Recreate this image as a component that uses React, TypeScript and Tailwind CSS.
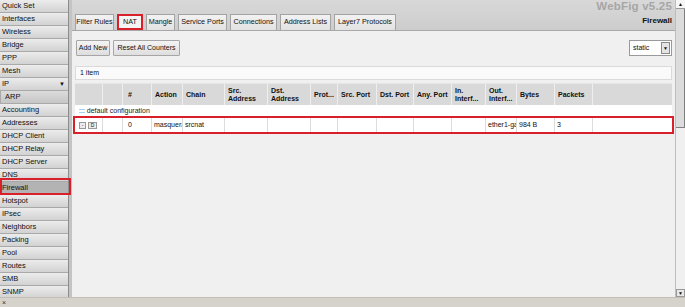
import React from "react";

const sideItems = [
  "Quick Set",
  "Interfaces",
  "Wireless",
  "Bridge",
  "PPP",
  "Mesh",
  "IP",
  "ARP",
  "Accounting",
  "Addresses",
  "DHCP Client",
  "DHCP Relay",
  "DHCP Server",
  "DNS",
  "Firewall",
  "Hotspot",
  "IPsec",
  "Neighbors",
  "Packing",
  "Pool",
  "Routes",
  "SMB",
  "SNMP",
];

const tabs: { label: string; w: string; active?: boolean }[] = [
  { label: "Filter Rules", w: "w-[39px]" },
  { label: "NAT", w: "w-[26px]", active: true },
  { label: "Mangle", w: "w-[29px]" },
  { label: "Service Ports", w: "w-[49px]" },
  { label: "Connections", w: "w-[47px]" },
  { label: "Address Lists", w: "w-[51px]" },
  { label: "Layer7 Protocols", w: "w-[62px]" },
];

const cols =
  "grid grid-cols-[28px_20px_29px_31px_42px_43px_43px_27px_39px_37px_38px_34px_31px_38px_38px_1fr]";

const headers: string[][] = [
  [],
  [],
  ["#"],
  ["Action"],
  ["Chain"],
  ["Src.", "Address"],
  ["Dst.", "Address"],
  ["Prot..."],
  ["Src. Port"],
  ["Dst. Port"],
  ["Any. Port"],
  ["In.", "Interf..."],
  ["Out.", "Interf..."],
  ["Bytes"],
  ["Packets"],
  [],
];

const rowCells = [
  "",
  "0",
  "masquerade",
  "srcnat",
  "",
  "",
  "",
  "",
  "",
  "",
  "",
  "ether1-gateway",
  "984 B",
  "3",
  "",
];

export default function App() {
  return (
    <div
      className="w-[685px] h-[307px] flex flex-col overflow-hidden bg-[#d4d0c8] text-[#111]"
      style={{ fontFamily: '"Liberation Sans", Arial, sans-serif' }}
    >
      <div className="flex h-[297px]">
        {/* Sidebar */}
        <div className="w-[72px] h-full flex bg-[#c4c4c4] overflow-hidden">
          <div className="w-[69px] h-full flex flex-col border-r border-[#8c8c8c] bg-gradient-to-b from-[#ececec] to-[#d2d2d2]">
            {sideItems.map((it) => {
              const isFw = it === "Firewall";
              const isArp = it === "ARP";
              return (
                <div
                  key={it}
                  className={`relative shrink-0 h-[13px] flex items-center justify-between border-b border-[#a9a9a9] text-[7.5px] leading-none ${
                    isFw
                      ? "bg-[#b3b3b3] pl-[2px] pr-[3px]"
                      : isArp
                      ? "bg-gradient-to-b from-[#dcdcdc] to-[#c6c6c6] pl-[4px] pr-[2px] border-l border-[#999]"
                      : "bg-gradient-to-b from-[#ececec] to-[#d2d2d2] pl-[2px] pr-[3px]"
                  }`}
                >
                  <span>{it}</span>
                  {it === "IP" && <span className="text-[6px]">▼</span>}
                  {isFw && (
                    <span className="absolute z-10 left-0 -right-[3px] -top-[4px] -bottom-[1px] border-2 border-[#d9202a]" />
                  )}
                </div>
              );
            })}
          </div>
        </div>

        {/* Main */}
        <div className="w-[603px] h-full flex flex-col">
          {/* Header */}
          <div className="h-[31px] bg-gradient-to-b from-[#d8d8d8] to-[#cdcdcd] flex flex-col border-b border-[#a8a8a8]">
            <div className="h-[14px] flex justify-end items-center pr-[3px]">
              <span className="text-[11.5px] font-bold text-[#a6a6a6] tracking-[0.2px]">
                WebFig v5.25
              </span>
            </div>
            <div className="flex-1 flex items-end justify-between pl-[3px] pr-[3px]">
              <div className="flex gap-[3px] items-end">
                {tabs.map((t) => (
                  <div
                    key={t.label}
                    className={`${t.w} h-[16px] flex items-center justify-center text-[7.2px] whitespace-nowrap ${
                      t.active
                        ? "bg-[#f4f4f4] border-2 border-[#d9202a]"
                        : "bg-gradient-to-b from-[#f2f2f2] to-[#e2e2e2] border border-b-0 border-[#a3a3a3]"
                    }`}
                  >
                    {t.label}
                  </div>
                ))}
              </div>
              <span className="text-[8px] font-bold pb-[3px]">Firewall</span>
            </div>
          </div>

          {/* Content */}
          <div className="flex-1 bg-[#f0f0f0] pt-[9px] pl-[3px] pr-[3px] flex flex-col">
            <div className="flex justify-between items-center h-[16px] pl-[1px]">
              <div className="flex gap-[3px]">
                <div className="h-[16px] w-[34px] flex items-center justify-center text-[7px] bg-gradient-to-b from-[#f4f4f4] to-[#dedede] border border-[#a6a6a6] rounded-[1px]">
                  Add New
                </div>
                <div className="h-[16px] w-[67px] flex items-center justify-center text-[7px] bg-gradient-to-b from-[#f4f4f4] to-[#dedede] border border-[#a6a6a6] rounded-[1px]">
                  Reset All Counters
                </div>
              </div>
              <div className="h-[16px] w-[43px] bg-white border border-[#9a9a9a] flex items-center justify-between pl-[3px] pr-[1px]">
                <span className="text-[7px]">static</span>
                <div className="w-[9px] h-[12px] bg-[#e4e4e4] border border-[#8a8a8a] flex items-center justify-center">
                  <span className="text-[5px] leading-none">▼</span>
                </div>
              </div>
            </div>

            <div className="mt-[10px] h-[14px] bg-[#fafafa] border border-[#dadada] flex items-center pl-[4px] text-[7px]">
              1 item
            </div>

            <div className="mt-[3px]">
              {/* Table header */}
              <div className={`${cols} h-[22px] bg-[#d9d9d9] border-t border-[#e6e6e6]`}>
                {headers.map((h, i) => (
                  <div
                    key={i}
                    className={`flex flex-col justify-center text-[7px] font-bold leading-[8px] whitespace-nowrap overflow-hidden ${
                      i < headers.length - 1 ? "border-r border-[#efefef]" : ""
                    } ${i === 2 ? "pl-[5px]" : "pl-[3px]"}`}
                  >
                    {h.map((l, j) => (
                      <span key={j}>{l}</span>
                    ))}
                  </div>
                ))}
              </div>
              {/* comment row */}
              <div className="h-[12px] bg-white flex items-center pl-[4px] text-[7px] text-[#222]">
                ::: default configuration
              </div>
              {/* data row */}
              <div className={`${cols} h-[14px] bg-white outline-2 outline-[#d9202a] mt-[1px]`}>
                <div className="flex items-center gap-[2px] pl-[4px] border-r border-[#dcdcdc]">
                  <div className="w-[7px] h-[7px] bg-[#ececec] border border-[#999] flex items-center justify-center text-[5px] leading-none">
                    -
                  </div>
                  <div className="w-[9px] h-[7px] bg-[#ececec] border border-[#999] flex items-center justify-center text-[5px] leading-none">
                    D
                  </div>
                </div>
                {rowCells.map((c, i) => (
                  <div
                    key={i}
                    className={`flex items-center text-[7px] whitespace-nowrap overflow-hidden ${
                      i === 1 ? "pl-[5px]" : "pl-[2px]"
                    } ${i < rowCells.length - 1 ? "border-r border-[#dcdcdc]" : ""}`}
                  >
                    {c}
                  </div>
                ))}
              </div>
            </div>
          </div>
        </div>

        {/* Scrollbar */}
        <div className="w-[10px] h-full flex flex-col bg-[#f0f0f0] border-l border-[#bdbdbd]">
          <div className="h-[9px] bg-[#f6f6f6] border-b border-[#999] flex items-center justify-center">
            <span className="text-[5px] leading-none">▲</span>
          </div>
          <div className="h-[119px] bg-[#dcdcdc] border-r border-b border-[#7e7e7e]" />
          <div className="flex-1" />
          <div className="h-[8px] bg-[#e8e8e8] border border-[#999] flex items-center justify-center">
            <span className="text-[5px] leading-none">▼</span>
          </div>
        </div>
      </div>

      {/* Bottom bar */}
      <div className="h-[10px] bg-[#d6d3cd] flex items-center pl-[2px] border-t border-[#c2beb6]">
        <span className="text-[7px] leading-none text-[#333]">×</span>
      </div>
    </div>
  );
}
